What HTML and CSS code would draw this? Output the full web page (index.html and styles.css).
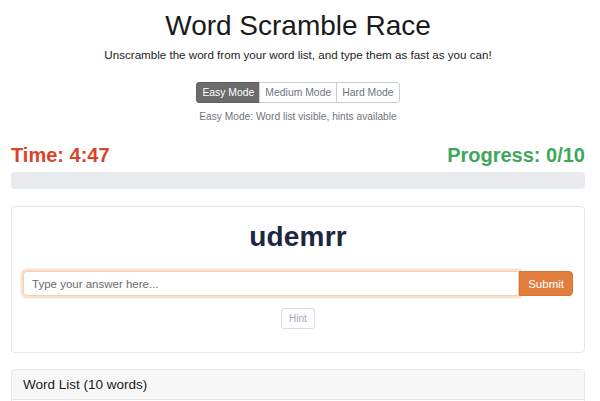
FILE: index.html
```html
<!DOCTYPE html>
<html lang="en">
<head>
<meta charset="utf-8">
<title>Word Scramble Race</title>
<link rel="stylesheet" href="styles.css">
</head>
<body>
<div class="container">
  <header class="intro">
    <h1 class="title">Word Scramble Race</h1>
    <p class="lead">Unscramble the word from your word list, and type them as fast as you can!</p>
    <div class="mode-group">
      <button class="mode active">Easy Mode</button>
      <button class="mode">Medium Mode</button>
      <button class="mode">Hard Mode</button>
    </div>
    <p class="mode-desc">Easy Mode: Word list visible, hints available</p>
  </header>

  <div class="stats">
    <div class="timer">Time: 4:47</div>
    <div class="progress-label">Progress: 0/10</div>
  </div>
  <div class="progress"><div class="progress-fill" style="width:0%"></div></div>

  <section class="card game">
    <div class="scrambled">udemrr</div>
    <div class="answer-row">
      <input class="answer" type="text" placeholder="Type your answer here...">
      <button class="submit">Submit</button>
    </div>
    <div class="hint-row"><button class="hint" disabled>Hint</button></div>
  </section>

  <section class="card words">
    <div class="card-header">Word List (10 words)</div>
    <div class="card-body"></div>
  </section>
</div>
</body>
</html>
```

FILE: styles.css
```css
* { box-sizing: border-box; }
html, body { margin: 0; padding: 0; background: #fff; }
body {
  font-family: "Liberation Sans", Helvetica, Arial, sans-serif;
  color: #212529;
  overflow: hidden;
}
.container { padding: 0 15px 0 11px; }

.intro { text-align: center; padding-top: 9px; }
.title {
  margin: 0;
  font-size: 28px;
  font-weight: 400;
  line-height: 34px;
  color: #1a1a1a;
}
.lead {
  margin: 4px 0 0;
  font-size: 11.6px;
  line-height: 16px;
  color: #222;
}
.mode-group {
  display: inline-flex;
  margin-top: 19px;
  border-radius: 3px;
}
.mode {
  font-family: inherit;
  font-size: 10.4px;
  line-height: 13px;
  padding: 3px 5px;
  height: 21px;
  background: #fff;
  color: #6c757d;
  border: 1px solid #c9ccd0;
  margin-left: -1px;
  cursor: pointer;
}
.mode:first-child { border-radius: 3px 0 0 3px; margin-left: 0; }
.mode:last-child { border-radius: 0 3px 3px 0; }
.mode.active { background: #6c6c6c; color: #fff; border-color: #5f5f5f; }
.mode-desc {
  margin: 7px 0 0;
  font-size: 10.2px;
  line-height: 14px;
  color: #6c757d;
}

.stats {
  display: flex;
  justify-content: space-between;
  margin-top: 19px;
  font-size: 20px;
  font-weight: 700;
  line-height: 24px;
}
.timer { color: #d9432b; }
.progress-label { color: #3da85a; }
.progress {
  margin-top: 5px;
  height: 17px;
  background: #e9eaee;
  border-radius: 4px;
  overflow: hidden;
}
.progress-fill { height: 100%; background: #3da85a; }

.card {
  border: 1px solid #e7e7e9;
  border-radius: 4px;
  background: #fff;
}
.game {
  margin-top: 17px;
  padding: 13px 11px 23px;
}
.scrambled {
  text-align: center;
  font-size: 28px;
  font-weight: 700;
  line-height: 34px;
  color: #1c2841;
  letter-spacing: 0.2px;
}
.answer-row {
  display: flex;
  margin-top: 17px;
  height: 25px;
}
.answer {
  flex: 1;
  min-width: 0;
  font-family: inherit;
  font-size: 11.5px;
  padding: 3px 8px;
  border: 1px solid #f3cfb3;
  border-radius: 4px 0 0 4px;
  box-shadow: 0 0 0 2.5px #f9e1cf;
  outline: none;
  color: #333;
}
.answer::placeholder { color: #6b6b6b; }
.submit {
  font-family: inherit;
  font-size: 11.5px;
  font-weight: 400;
  color: #fff;
  background: #e17d3d;
  border: 1px solid #d97430;
  border-radius: 0 4px 4px 0;
  padding: 0 8px;
  cursor: pointer;
}
.hint-row { display: flex; justify-content: center; margin-top: 12px; }
.hint {
  font-family: inherit;
  font-size: 10px;
  line-height: 12px;
  padding: 3px 7px;
  height: 21px;
  background: #fff;
  color: #a9a6c2;
  border: 1px solid #dcdae8;
  border-radius: 3px;
}

.words { margin-top: 16px; overflow: hidden; }
.card-header {
  background: #f7f7f7;
  border-bottom: 1px solid #e4e4e4;
  padding: 6px 11px;
  font-size: 13.5px;
  line-height: 17px;
  color: #1a1a1a;
}
.card-body { height: 60px; }
```
